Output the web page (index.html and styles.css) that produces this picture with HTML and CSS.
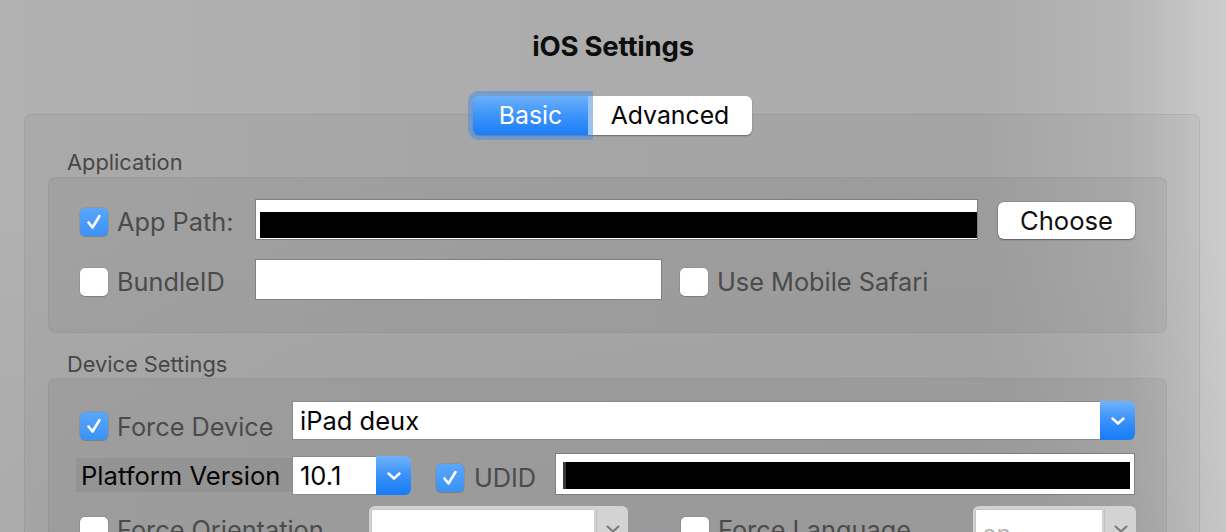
FILE: index.html
```html
<!DOCTYPE html>
<html lang="en">
<head>
<meta charset="utf-8">
<title>iOS Settings</title>
<link rel="stylesheet" href="styles.css">
</head>
<body>
<div class="window">
  <h1 class="title">iOS Settings</h1>
  <div class="tabs">
    <div class="seg seg-active">Basic</div>
    <div class="seg">Advanced</div>
  </div>
  <div class="panel">
    <div class="section-label">Application</div>
    <div class="group group-app">
      <div class="row">
        <span class="check check-on"><svg viewBox="0 0 28 28" width="28" height="28"><path d="M8.5 14.5 L12.5 19.5 L19.5 8" fill="none" stroke="#fff" stroke-width="2.6" stroke-linecap="round" stroke-linejoin="round"/></svg></span>
        <span class="label label-app">App Path:</span>
        <div class="field field-path"><div class="redact"></div></div>
        <div class="btn">Choose</div>
      </div>
      <div class="row">
        <span class="check"></span>
        <span class="label label-app">BundleID</span>
        <div class="field field-bundle"></div>
        <span class="check check-gap"></span>
        <span class="label">Use Mobile Safari</span>
      </div>
    </div>

    <div class="section-label section-device">Device Settings</div>
    <div class="group group-device">
      <div class="row row-device">
        <span class="check check-on"><svg viewBox="0 0 28 28" width="28" height="28"><path d="M8.5 14.5 L12.5 19.5 L19.5 8" fill="none" stroke="#fff" stroke-width="2.6" stroke-linecap="round" stroke-linejoin="round"/></svg></span>
        <span class="label label-device">Force Device</span>
        <div class="popup popup-device">
          <span class="popup-text">iPad deux</span>
          <span class="popup-arrow"><svg viewBox="0 0 14 8" width="14" height="8"><path d="M1.5 1.5 L7 6.5 L12.5 1.5" fill="none" stroke="#fff" stroke-width="2.4" stroke-linecap="round" stroke-linejoin="round"/></svg></span>
        </div>
      </div>
      <div class="row row-platform">
        <span class="platform-label">Platform Version</span>
        <div class="popup popup-version">
          <span class="popup-text">10.1</span>
          <span class="popup-arrow"><svg viewBox="0 0 14 8" width="14" height="8"><path d="M1.5 1.5 L7 6.5 L12.5 1.5" fill="none" stroke="#fff" stroke-width="2.4" stroke-linecap="round" stroke-linejoin="round"/></svg></span>
        </div>
        <span class="check check-on check-udid"><svg viewBox="0 0 28 28" width="28" height="28"><path d="M8.5 14.5 L12.5 19.5 L19.5 8" fill="none" stroke="#fff" stroke-width="2.6" stroke-linecap="round" stroke-linejoin="round"/></svg></span>
        <span class="label label-udid">UDID</span>
        <div class="field field-udid"><div class="redact redact-udid"></div></div>
      </div>
      <div class="row row-last">
        <span class="check"></span>
        <span class="label label-orient">Force Orientation</span>
        <div class="popup popup-off popup-orient">
          <span class="popup-inner"></span>
          <span class="popup-arrow-off"><svg viewBox="0 0 14 8" width="14" height="8"><path d="M1.5 1.5 L7 6.5 L12.5 1.5" fill="none" stroke="#7a7a7a" stroke-width="2" stroke-linecap="round" stroke-linejoin="round"/></svg></span>
        </div>
        <span class="check check-lang"></span>
        <span class="label label-lang">Force Language</span>
        <div class="popup popup-off popup-lang">
          <span class="popup-inner"><span class="popup-hint">en</span></span>
          <span class="popup-arrow-off"><svg viewBox="0 0 14 8" width="14" height="8"><path d="M1.5 1.5 L7 6.5 L12.5 1.5" fill="none" stroke="#7a7a7a" stroke-width="2" stroke-linecap="round" stroke-linejoin="round"/></svg></span>
        </div>
      </div>
    </div>
  </div>
</div>
</body>
</html>
```
FILE: styles.css
```css
* { box-sizing: border-box; }
html, body { margin: 0; padding: 0; }
body {
  width: 1226px;
  height: 532px;
  overflow: hidden;
  font-family: "Inter", "Roboto", "Liberation Sans", sans-serif;
  background:
    linear-gradient(180deg, rgba(0,0,0,0) 40%, rgba(40,20,60,0.04) 100%),
    linear-gradient(90deg, #b1b1b1 0%, #acacac 45%, #ababab 80%, #b6b6b6 92%, #cdcdcd 100%);
  color: #4c4c4c;
}
.window {
  display: flex;
  flex-direction: column;
  align-items: stretch;
}
.title {
  margin: 0;
  padding-top: 31px;
  height: 96px;
  text-align: center;
  font-size: 27.5px;
  font-weight: 700;
  line-height: 30px;
  color: #0d0d0d;
  letter-spacing: -0.2px;
}
.tabs {
  align-self: flex-start;
  margin-left: 473px;
  display: flex;
  height: 39px;
  margin-bottom: -21px;
  position: relative;
  z-index: 2;
  border-radius: 6px;
  box-shadow: 0 1px 1.5px rgba(0,0,0,0.35);
}
.seg {
  display: flex;
  align-items: center;
  justify-content: center;
  font-size: 24.8px;
  line-height: 1;
  background: #fff;
  color: #050505;
  width: 164px;
  border-radius: 0 6px 6px 0;
}
.seg-active {
  width: 115px;
  color: #fff;
  background: linear-gradient(180deg, #6cb0fb 0%, #3d93fa 50%, #1b7ef8 100%);
  border-radius: 6px 0 0 6px;
  box-shadow: 0 0 0 5px rgba(74, 144, 232, 0.55);
  position: relative;
  z-index: 1;
}
.panel {
  margin: 0 26px 0 24px;
  height: 440px;
  border: 1px solid rgba(0,0,0,0.06);
  border-radius: 8px;
  background: rgba(0,0,0,0.035);
  padding: 35px 32px 0 23px;
}
.section-label {
  font-size: 21.8px;
  line-height: 24px;
  height: 24px;
  padding-left: 19px;
  margin-bottom: 3px;
  color: #474747;
  white-space: nowrap;
}
.section-device {
  margin-top: 19px;
  margin-bottom: 2px;
}
.group {
  border: 1px solid rgba(0,0,0,0.045);
  border-radius: 8px;
  background: rgba(0,0,0,0.045);
  padding: 21px 31px 31px 31px;
  display: flex;
  flex-direction: column;
}
.group-app { gap: 18px; }
.group-device {
  padding-top: 22px;
  height: 200px;
}
.row {
  display: flex;
  align-items: center;
  height: 42px;
}
.check {
  flex: none;
  width: 28px;
  height: 28px;
  margin-top: 4px;
  border-radius: 5px;
  background: #fff;
  box-shadow: 0 0 0 0.5px rgba(0,0,0,0.12), 0 1px 1px rgba(0,0,0,0.15);
  display: flex;
}
.check-on {
  background: linear-gradient(180deg, #5aa6fa 0%, #3b92f6 100%);
}
.label {
  flex: none;
  font-size: 25.3px;
  line-height: 28px;
  margin-top: 4px;
  margin-left: 9px;
  color: #4b4b4b;
  white-space: nowrap;
}
.label-app { width: 138px; }
.label-device { width: 175px; }
.label-orient { width: 253px; }
.label-lang { width: 255px; }
.label-udid { width: 81px; margin-left: 10px; }
.check-gap { margin-left: 18px; }
.check-lang { margin-left: 53px; }
.check-udid { margin-left: 25px; }
.field {
  flex: none;
  background: #fff;
  border: 1px solid #7f7f7f;
  height: 41px;
  align-self: flex-start;
  display: flex;
}
.field-path { width: 723px; padding: 12px 0 1px 4px; }
.field-bundle { width: 407px; }
.field-udid { flex: 1; height: 42px; padding: 8px 4px 5px 7px; }
.redact { background: #000; flex: 1; }
.redact-udid { border-left: 3px solid #3a3a3a; }
.btn {
  flex: none;
  margin-left: 20px;
  margin-top: 1px;
  width: 137px;
  height: 37px;
  border-radius: 6px;
  background: #fff;
  box-shadow: 0 0 0 0.5px rgba(0,0,0,0.2), 0 1px 1.5px rgba(0,0,0,0.35);
  display: flex;
  align-items: center;
  justify-content: center;
  font-size: 25.6px;
  color: #111;
}

/* device rows */
.row-device {
  height: 39px;
  align-items: flex-end;
}
.row-device .check,
.row-device .label { margin-top: 0; }
.row-device .label { margin-bottom: -1px; }
.row-platform {
  margin-top: 13px;
  height: 42px;
}
.row-platform .check,
.row-platform .label { margin-top: 8px; }
.row-last {
  margin-top: 11px;
  height: 48px;
  align-items: flex-start;
}
.row-last .check { margin-top: 11px; }
.row-last .label { margin-top: 10px; }

.popup {
  flex: none;
  display: flex;
  align-items: stretch;
  height: 39px;
  background: #fff;
  border: 1px solid #8a8a8a;
  border-right: none;
  border-radius: 0 6px 6px 0;
}
.popup-device { flex: 1; }
.popup-version { width: 119px; align-self: flex-end; }
.popup-text {
  flex: 1;
  display: flex;
  align-items: center;
  padding-left: 7px;
  font-size: 25.5px;
  color: #050505;
}
.popup-arrow {
  flex: none;
  width: 35px;
  margin: -1px 0;
  border-radius: 0 6px 6px 0;
  background: linear-gradient(180deg, #6eb3fb 0%, #3a91f9 50%, #167cf7 100%);
  display: flex;
  align-items: center;
  justify-content: center;
}
.platform-label {
  flex: none;
  margin-left: -4px;
  margin-top: 2px;
  width: 216px;
  height: 34px;
  background: rgba(0,0,0,0.055);
  display: flex;
  align-items: center;
  padding-left: 5px;
  font-size: 25.6px;
  color: #050505;
  white-space: nowrap;
}
.popup-off {
  height: 44px;
  background: #d3d3d3;
  border: none;
  border-radius: 6px;
  padding: 3px 0 0 2px;
}
.popup-orient { width: 259px; margin-left: -1px; }
.popup-lang { width: 163px; }
.popup-inner {
  flex: 1;
  background: #fff;
  border-top: 1px solid #c4c4c4;
  border-left: 1px solid #c4c4c4;
  margin-right: 2px;
  padding: 10px 0 0 6px;
}
.popup-hint { font-size: 25px; color: #b5b5b5; line-height: 28px; }
.popup-arrow-off {
  flex: none;
  width: 32px;
  display: flex;
  align-items: flex-start;
  justify-content: center;
  padding-top: 16px;
  border-left: 1px solid #c0c0c0;
}
```
